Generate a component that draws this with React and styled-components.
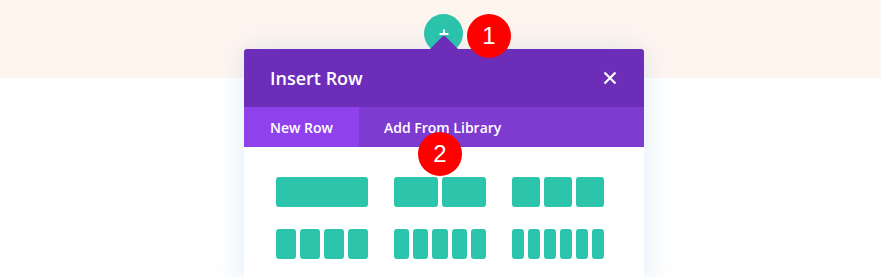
import styled, { createGlobalStyle } from "styled-components";

const GlobalStyle = createGlobalStyle`
    html, body {
        margin: 0;
        padding: 0;
        background: #ffffff;
        font-family: "Open Sans", "Liberation Sans", sans-serif;
        overflow: hidden;
    }
`;

const Page = styled.div`
    width: 881px;
    height: 277px;
    padding-left: 7px;
    box-sizing: border-box;
    background: linear-gradient(#fff5ef 0 78px, #ffffff 78px);
    display: flex;
    flex-direction: column;
    align-items: center;
    overflow: hidden;
`;

const AddButtonWrap = styled.div`
    position: relative;
    margin-top: 14px;
    margin-left: -1px;
`;

const AddButton = styled.div`
    width: 39px;
    height: 39px;
    border-radius: 50%;
    background: #2cc4ab;
    display: flex;
    align-items: center;
    justify-content: center;
    color: #ffffff;
`;

const Badge = styled.div`
    position: absolute;
    left: ${props => props.left}px;
    top: ${props => props.top}px;
    width: 44px;
    height: 44px;
    border-radius: 50%;
    background: #ff0000;
    color: #ffffff;
    font-family: "Liberation Sans", Arial, sans-serif;
    font-size: 24px;
    display: flex;
    align-items: center;
    justify-content: center;
    z-index: 5;
`;

const Modal = styled.div`
    position: relative;
    z-index: 2;
    width: 400px;
    margin-top: -4px;
    border-radius: 3px 3px 0 0;
    box-shadow: 0 0 30px rgba(43, 135, 218, 0.16);
    background: #ffffff;
`;

const Header = styled.div`
    position: relative;
    height: 58px;
    padding: 0 27px 0 26px;
    background: #6c2eb9;
    border-radius: 3px 3px 0 0;
    display: flex;
    align-items: center;
    justify-content: space-between;

    &::before {
        content: "";
        position: absolute;
        top: -14px;
        left: 50%;
        margin-left: -14px;
        border-left: 14px solid transparent;
        border-right: 14px solid transparent;
        border-bottom: 14px solid #6c2eb9;
    }
`;

const Title = styled.h2`
    margin: 0;
    color: #ffffff;
    font-size: 18px;
    font-weight: 600;
`;

const Close = styled.div`
    width: 14px;
    height: 14px;
    display: flex;
`;

const Tabs = styled.div`
    display: flex;
    height: 40px;
    background: #7e3bd0;
`;

const Tab = styled.div`
    padding: 0 ${props => (props.active ? 26 : 25)}px 0 ${props => (props.active ? 26 : 25)}px;
    background: ${props => (props.active ? "#8f42ec" : "transparent")};
    color: #ffffff;
    font-size: 14px;
    font-weight: 600;
    display: flex;
    align-items: center;
`;

const Body = styled.div`
    padding: 30px 40px 30px 32px;
    display: grid;
    grid-template-columns: repeat(3, 92px);
    column-gap: 26px;
    row-gap: 22px;
`;

const Layout = styled.div`
    display: flex;
    gap: 4px;
    height: 30px;
`;

const Column = styled.div`
    flex: 1;
    background: #2cc4ab;
    border-radius: 3px;
`;

const layouts = [1, 2, 3, 4, 5, 6];

export default function App() {
    return (
        <>
            <GlobalStyle />
            <Page>
                <AddButtonWrap>
                    <AddButton>
                        <svg width="10" height="10" viewBox="0 0 10 10">
                            <path d="M5 0.5v9M0.5 5h9" stroke="#fff" strokeWidth="2" />
                        </svg>
                    </AddButton>
                    <Badge left={43} top={0}>1</Badge>
                </AddButtonWrap>
                <Modal>
                    <Header>
                        <Title>Insert Row</Title>
                        <Close>
                            <svg width="14" height="14" viewBox="0 0 14 14">
                                <path d="M1.5 1.5l11 11M12.5 1.5l-11 11" stroke="#fff" strokeWidth="2.2" />
                            </svg>
                        </Close>
                    </Header>
                    <Tabs>
                        <Tab active>New Row</Tab>
                        <Tab>Add From Library</Tab>
                    </Tabs>
                    <Badge left={174} top={83}>2</Badge>
                    <Body>
                        {layouts.map(count => (
                            <Layout key={count}>
                                {Array.from({ length: count }).map((_, i) => <Column key={i} />)}
                            </Layout>
                        ))}
                    </Body>
                </Modal>
            </Page>
        </>
    );
}
